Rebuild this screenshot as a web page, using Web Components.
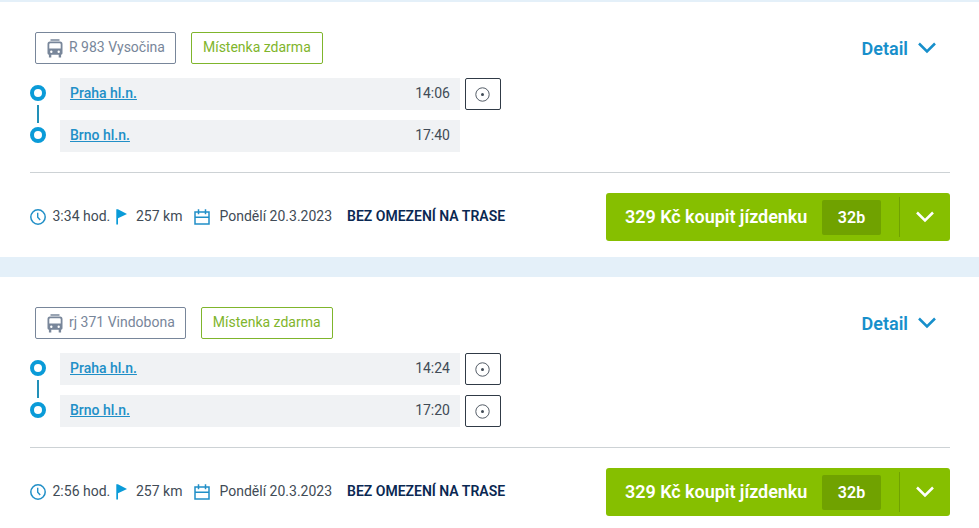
<!DOCTYPE html>
<html lang="cs">
<head>
<meta charset="utf-8">
<title>Spojení</title>
<style>
    html, body {
        height: 100%;
    }
    body {
        margin: 0;
        overflow: hidden;
        background: #e4f0f9;
        color: #414b56;
        font: 14px/20px Roboto, "Liberation Sans", sans-serif;
    }
</style>
</head>
<body>
<connection-list>
    <train-connection train="R 983 Vysočina" duration="3:34 hod." distance="257 km" date="Pondělí 20.3.2023" price="329 Kč" points="32b">
        <train-stop time="14:06" target>Praha hl.n.</train-stop>
        <train-stop time="17:40" last>Brno hl.n.</train-stop>
    </train-connection>
    <train-connection train="rj 371 Vindobona" duration="2:56 hod." distance="257 km" date="Pondělí 20.3.2023" price="329 Kč" points="32b">
        <train-stop time="14:24" target>Praha hl.n.</train-stop>
        <train-stop time="17:20" target last>Brno hl.n.</train-stop>
    </train-connection>
</connection-list>

<script>
const ICONS = {
    train: `<svg width="16" height="19" viewBox="0 0 16 19"><path fill="currentColor" fill-rule="evenodd" d="M3.500.3h9v1.400h-9zM3.500 2.500h9A2.700 2.700 0 0 1 15.500 5.200V14.300Q15.500 15.700 14.100 15.700V18.400H11.700V15.700H4.300V18.400H1.900V15.700Q.5 15.700.5 14.300V5.200A2.700 2.700 0 0 1 3.500 2.500ZM3.400 4.200Q2.300 4.200 2.300 5.300V9.500H13.700V5.300Q13.700 4.200 12.600 4.200ZM4.300 11.500A1.200 1.200 0 1 0 4.300 13.900 1.200 1.200 0 0 0 4.300 11.500ZM11.700 11.500A1.200 1.200 0 1 0 11.700 13.900 1.200 1.200 0 0 0 11.700 11.500Z"/></svg>`,
    chevron: `<svg width="18" height="12" viewBox="0 0 18 12"><path fill="none" stroke="currentColor" stroke-width="2.500" d="M1 1.500 9 9.500 17 1.500"/></svg>`,
    target: `<svg width="15" height="15" viewBox="0 0 15 15"><circle cx="7.500" cy="7.500" r="6.700" fill="none" stroke="currentColor" stroke-width=".9"/><circle cx="7.500" cy="7.500" r="1.500" fill="currentColor"/></svg>`,
    clock: `<svg width="16" height="16" viewBox="0 0 16 16"><circle cx="8" cy="8" r="7.200" fill="none" stroke="currentColor" stroke-width="1.500"/><path fill="none" stroke="currentColor" stroke-width="1.400" d="M7.700 3.800V8.300L10.200 11"/></svg>`,
    flag: `<svg width="12" height="16" viewBox="0 0 12 16"><path fill="currentColor" d="M.3.300H1.900L11 5 2 9.300V15.500H.3Z"/></svg>`,
    calendar: `<svg width="16" height="16" viewBox="0 0 16 16"><path fill="none" stroke="currentColor" stroke-width="1.500" d="M1 3H15V15H1ZM1 8.200H15M4.500.3V5.200M11.500.3V5.200"/></svg>`
};

class UiIcon extends HTMLElement {
    connectedCallback() {
        if (!this.shadowRoot) this.attachShadow({mode: 'open'});
        this.shadowRoot.innerHTML = `
        <style>
            :host { display: inline-flex; flex: none; }
            svg { display: block; }
        </style>
        ${ICONS[this.getAttribute('name')]}`;
    }
}

class UiTag extends HTMLElement {
    constructor() {
        super();
        this.attachShadow({mode: 'open'}).innerHTML = `
        <style>
            :host {
                display: inline-flex;
                box-sizing: border-box;
                height: 32px;
                padding: 0 11px 2px;
                align-items: center;
                border: 1px solid currentColor;
                border-radius: 2px;
                white-space: nowrap;
            }
        </style>
        <slot></slot>`;
    }
}

class TrainStop extends HTMLElement {
    connectedCallback() {
        if (!this.shadowRoot) this.attachShadow({mode: 'open'});
        const target = this.hasAttribute('target')
            ? '<button aria-label="Poloha"><ui-icon name="target"></ui-icon></button>'
            : '';
        this.shadowRoot.innerHTML = `
        <style>
            :host {
                display: grid;
                grid-template-columns: 16px 400px 36px;
                column-gap: 14px;
                height: 42px;
            }
            :host([last]) {
                height: 32px;
            }
            .track {
                display: flex;
                flex-direction: column;
                align-items: center;
                gap: 4px;
                padding-top: 7px;
            }
            .ring {
                flex: none;
                box-sizing: border-box;
                width: 16px;
                height: 16px;
                border: 4px solid #0a9bd8;
                border-radius: 50%;
            }
            .line {
                flex: none;
                width: 2px;
                height: 18px;
                background: #2290b8;
            }
            :host([last]) .line {
                display: none;
            }
            .row {
                display: flex;
                box-sizing: border-box;
                height: 32px;
                padding: 0 10px 2px;
                align-items: center;
                justify-content: space-between;
                background: #f0f2f4;
            }
            a {
                color: #218fc7;
                font-weight: 500;
                text-decoration: underline;
            }
            button {
                display: flex;
                box-sizing: border-box;
                width: 36px;
                height: 32px;
                margin-left: -9px;
                padding: 0 1px 0 0;
                align-items: center;
                justify-content: center;
                border: 1px solid #303a46;
                border-radius: 2px;
                background: #fff;
                color: #414b56;
            }
        </style>
        <div class="track"><span class="ring"></span><span class="line"></span></div>
        <div class="row"><a><slot></slot></a><span>${this.getAttribute('time')}</span></div>
        ${target}`;
    }
}

class BuyButton extends HTMLElement {
    connectedCallback() {
        if (!this.shadowRoot) this.attachShadow({mode: 'open'});
        this.shadowRoot.innerHTML = `
        <style>
            :host {
                display: flex;
                box-sizing: border-box;
                width: 344px;
                height: 48px;
                padding-left: 19px;
                align-items: center;
                border-radius: 3px;
                background: #86bf00;
                color: #fff;
                font-size: 18px;
                font-weight: 600;
                white-space: nowrap;
            }
            .label {
                width: 197px;
                letter-spacing: -0.04px;
            }
            .points {
                width: 59px;
                margin-top: 1px;
                border-radius: 2px;
                background: #70a200;
                font-size: 16px;
                line-height: 35px;
                text-align: center;
            }
            .more {
                display: flex;
                box-sizing: border-box;
                width: 51px;
                height: 40px;
                margin-left: 18px;
                align-items: center;
                justify-content: center;
                border-left: 1px solid #70a200;
            }
        </style>
        <span class="label"><slot></slot></span>
        <span class="points">${this.getAttribute('points')}</span>
        <span class="more"><ui-icon name="chevron"></ui-icon></span>`;
    }
}

class TrainConnection extends HTMLElement {
    connectedCallback() {
        if (!this.shadowRoot) this.attachShadow({mode: 'open'});
        const attr = name => this.getAttribute(name);
        this.shadowRoot.innerHTML = `
        <style>
            :host {
                display: block;
                box-sizing: border-box;
                height: 255px;
                padding: 30px 29px 0 30px;
                background: #fff;
            }
            header {
                display: flex;
                height: 32px;
                padding: 0 14px 0 5px;
                gap: 15px;
                align-items: center;
            }
            .train {
                padding-right: 10px;
                color: #78869a;
            }
            .train ui-icon {
                margin: 2px 6px 0 0;
            }
            .free {
                color: #7fb52c;
            }
            .detail {
                display: flex;
                margin-left: auto;
                gap: 10px;
                align-items: center;
                color: #178fcb;
                font-size: 18px;
                font-weight: 600;
            }
            .detail span {
                padding-top: 2px;
            }
            .stops {
                display: flex;
                height: 74px;
                margin-top: 14px;
                flex-direction: column;
            }
            footer {
                display: flex;
                margin-top: 20px;
                padding-top: 20px;
                justify-content: space-between;
                border-top: 1px solid #cdd2d5;
            }
            .info {
                display: grid;
                grid-template-columns: 22.5px 63.5px 20px 58px 25.5px 127.5px auto;
                height: 46px;
                align-items: center;
                white-space: nowrap;
            }
            .info ui-icon {
                margin-top: 2px;
                color: #218fc7;
            }
            .info ui-icon[name="flag"] {
                color: #0a9bd8;
            }
            b {
                color: #0a2852;
                font-weight: 600;
            }
        </style>
        <header>
            <ui-tag class="train"><ui-icon name="train"></ui-icon>${attr('train')}</ui-tag>
            <ui-tag class="free">Místenka zdarma</ui-tag>
            <span class="detail"><span>Detail</span><ui-icon name="chevron"></ui-icon></span>
        </header>
        <div class="stops"><slot></slot></div>
        <footer>
            <div class="info">
                <ui-icon name="clock"></ui-icon><span>${attr('duration')}</span>
                <ui-icon name="flag"></ui-icon><span>${attr('distance')}</span>
                <ui-icon name="calendar"></ui-icon><span>${attr('date')}</span>
                <b>BEZ OMEZENÍ NA TRASE</b>
            </div>
            <buy-button points="${attr('points')}">${attr('price')} koupit jízdenku</buy-button>
        </footer>`;
    }
}

class ConnectionList extends HTMLElement {
    constructor() {
        super();
        this.attachShadow({mode: 'open'}).innerHTML = `
        <style>
            :host {
                display: flex;
                padding-top: 2px;
                flex-direction: column;
                gap: 20px;
            }
        </style>
        <slot></slot>`;
    }
}

customElements.define("ui-icon", UiIcon);
customElements.define("ui-tag", UiTag);
customElements.define("train-stop", TrainStop);
customElements.define("buy-button", BuyButton);
customElements.define("train-connection", TrainConnection);
customElements.define("connection-list", ConnectionList);
</script>
</body>
</html>
